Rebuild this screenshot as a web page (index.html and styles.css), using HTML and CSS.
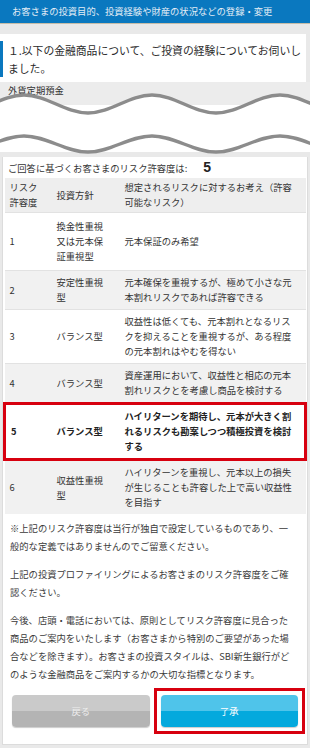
FILE: index.html
```html
<!DOCTYPE html>
<html>
<head>
  <meta charset="utf-8">
  <meta name="viewport" content="width=device-width, initial-scale=1.0">
  <link rel="stylesheet" href="styles.css">
</head>
<body>

<div class="page_title">お客さまの投資目的、投資経験や財産の状況などの登録・変更</div>

<div class="question_card">
  <p class="question">１.以下の金融商品について、ご投資の経験についてお伺いしました。</p>
</div>

<div class="cut">
  <div class="cut_top">外貨定期預金</div>
  <div class="cut_mid"></div>
  <div class="cut_bottom"></div>
  <svg class="tear" width="310" height="75" viewBox="0 0 310 75">
    <path fill="#fff" d="M -40 31 C -17 31 1 13 24 13 S 65 31 88 31 S 129 13 152 13 S 193 31 216 31 S 257 13 280 13 S 321 31 344 31
      L 344 70 C 321 70 303 54 280 54 S 239 70 216 70 S 175 54 152 54 S 111 70 88 70 S 47 54 24 54 S -17 70 -40 70 Z"/>
    <path fill="none" stroke="#8c8c8c" stroke-width="3.4" d="M -40 31 C -17 31 1 13 24 13 S 65 31 88 31 S 129 13 152 13 S 193 31 216 31 S 257 13 280 13 S 321 31 344 31"/>
    <path fill="none" stroke="#8c8c8c" stroke-width="3.4" d="M 344 70 C 321 70 303 54 280 54 S 239 70 216 70 S 175 54 152 54 S 111 70 88 70 S 47 54 24 54 S -17 70 -40 70"/>
  </svg>
</div>

<div class="panel">
  <div class="result">ご回答に基づくお客さまのリスク許容度は:<span class="result_num">5</span></div>

  <table class="risk_table">
    <colgroup>
      <col class="col_level">
      <col class="col_policy">
      <col class="col_desc">
    </colgroup>
    <thead>
      <tr>
        <th>リスク<br>許容度</th>
        <th>投資方針</th>
        <th>想定されるリスクに対するお考え（許容可能なリスク）</th>
      </tr>
    </thead>
    <tbody>
      <tr class="first_row">
        <td>1</td>
        <td>換金性重視又は元本保証重視型</td>
        <td>元本保証のみ希望</td>
      </tr>
      <tr>
        <td>2</td>
        <td>安定性重視型</td>
        <td>元本確保を重視するが、極めて小さな元本割れリスクであれば許容できる</td>
      </tr>
      <tr>
        <td>3</td>
        <td>バランス型</td>
        <td>収益性は低くても、元本割れとなるリスクを抑えることを重視するが、ある程度の元本割れはやむを得ない</td>
      </tr>
      <tr>
        <td>4</td>
        <td>バランス型</td>
        <td>資産運用において、収益性と相応の元本割れリスクとを考慮し商品を検討する</td>
      </tr>
      <tr class="is_selected">
        <td>5</td>
        <td>バランス型</td>
        <td>ハイリターンを期待し、元本が大きく割れるリスクも勘案しつつ積極投資を検討する</td>
      </tr>
      <tr>
        <td>6</td>
        <td>収益性重視型</td>
        <td>ハイリターンを重視し、元本以上の損失が生じることも許容した上で高い収益性を目指す</td>
      </tr>
    </tbody>
  </table>

  <div class="notes">
    <p>※上記のリスク許容度は当行が独自で設定しているものであり、一般的な定義ではありませんのでご留意ください。</p>
    <p>上記の投資プロファイリングによるお客さまのリスク許容度をご確認ください。</p>
    <p>今後、店頭・電話においては、原則としてリスク許容度に見合った商品のご案内をいたします（お客さまから特別のご要望があった場合などを除きます）。お客さまの投資スタイルは、SBI新生銀行がどのような金融商品をご案内するかの大切な指標となります。</p>
  </div>

  <div class="buttons">
    <div class="btn_wrap">
      <button class="btn btn_back">戻る</button>
    </div>
    <div class="btn_wrap btn_mark">
      <button class="btn btn_ok">了承</button>
    </div>
  </div>
</div>

</body>
</html>
```

FILE: styles.css
```css
body {
  margin: 0;
  background-color: #e9e9e9;
  font-family: "Noto Sans CJK JP", "Noto Sans", sans-serif;
  color: #333;
}

.page_title {
  height: 23px;
  line-height: 23px;
  padding-left: 12px;
  background-color: #0a78bf;
  color: #e4edf6;
  font-size: 9.3px;
  border-bottom: 1px solid #c6bda9;
  margin-bottom: 10px;
}

.question_card {
  background-color: #fff;
  margin-right: 4px;
  padding: 7px 0 5px;
}

.question {
  margin: 0;
  border-left: 3px solid #0a78bf;
  padding-left: 5px;
  font-size: 10.8px;
  line-height: 18px;
  color: #2a2a2a;
}

/* omitted part of the page, torn out */
.cut {
  position: relative;
  height: 75px;
  display: flex;
  flex-direction: column;
  background-color: #fff;
}

.cut_top {
  height: 23px;
  padding: 1px 8px 0;
  box-sizing: border-box;
  background-color: #ececec;
  font-size: 9.3px;
  line-height: 15px;
}

.cut_mid {
  flex: 1;
}

.cut_bottom {
  height: 5px;
  background-color: #e9e9e9;
}

.tear {
  position: absolute;
  left: 0;
  top: 0;
}

.panel {
  background-color: #fff;
  margin: 0 2px;
  border: 1px solid #dcdcdc;
  border-top: 0;
}

.result {
  height: 21px;
  line-height: 21px;
  padding-left: 5px;
  font-size: 9.3px;
}

.result_num {
  margin-left: 16px;
  font-family: "Liberation Sans", sans-serif;
  font-weight: bold;
  font-size: 14px;
  color: #222;
}

.risk_table {
  width: 100%;
  border-collapse: collapse;
  table-layout: fixed;
  font-size: 9.3px;
  line-height: 15px;
}

.col_level {
  width: 46px;
}
.col_policy {
  width: 68px;
}

.risk_table th {
  background-color: #eee;
  font-weight: normal;
  text-align: left;
  padding: 2px 12px 2px 6px;
}

.risk_table td {
  padding: 4px 12px 4px 6px;
  border-top: 1px solid #e2e2e2;
}

.risk_table tr.first_row td {
  padding-top: 6px;
  padding-bottom: 6px;
}

.risk_table th:first-child,
.risk_table td:first-child {
  padding-left: 5px;
}

.risk_table th:nth-child(2),
.risk_table td:nth-child(2) {
  padding-right: 8px;
}

.risk_table tbody tr:nth-child(even) td {
  background-color: #f1f1f1;
}

.risk_table tr.is_selected td {
  font-weight: bold;
  color: #222;
  border-top: 3px solid #d7000f;
  border-bottom: 3px solid #d7000f;
}
.risk_table tr.is_selected td:first-child {
  border-left: 3px solid #d7000f;
}
.risk_table tr.is_selected td:last-child {
  border-right: 3px solid #d7000f;
}

.notes {
  padding: 5px 11px 0 7px;
  font-size: 9.3px;
  line-height: 18px;
  color: #3a3a3a;
}

.notes p {
  margin: 0 0 10px;
}
.notes p:last-child {
  margin-bottom: 0;
}

.buttons {
  display: flex;
  gap: 11px;
  padding: 12px 9px 17px;
}

.btn_wrap {
  flex: 1 1 0;
  min-width: 0;
}

.btn_mark {
  outline: 3px solid #d7000f;
  outline-offset: 4px;
}

.btn {
  display: block;
  width: 100%;
  height: 32px;
  margin: 0;
  border: 0;
  border-radius: 4px;
  font-family: inherit;
  font-size: 9.3px;
  color: #fff;
  box-shadow: 0 1px 1px rgba(0, 0, 0, 0.2);
}

.btn_back {
  background: linear-gradient(#cacaca 50%, #b4b4b4 50%);
  color: #eee;
}

.btn_ok {
  background: linear-gradient(#4fc4ea 50%, #04a9dd 50%);
}
```
